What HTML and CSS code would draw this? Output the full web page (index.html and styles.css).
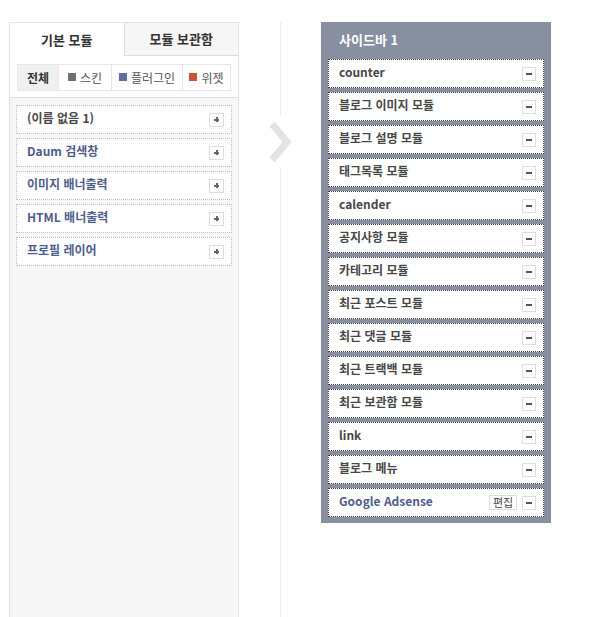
FILE: index.html
```html
<!DOCTYPE html>
<html lang="ko">
<head>
<meta charset="utf-8">
<title>사이드바 모듈</title>
<link rel="stylesheet" href="styles.css">
</head>
<body>
<div class="page">
  <section class="modules">
    <div class="modules-head">
      <div class="tabs">
        <div class="tab active">기본 모듈</div>
        <div class="tab">모듈 보관함</div>
      </div>
      <div class="filter">
        <span class="f-item f-all">전체</span>
        <span class="f-item f-skin"><i class="sq sq-skin"></i>스킨</span>
        <span class="f-item f-plugin"><i class="sq sq-plugin"></i>플러그인</span>
        <span class="f-item f-widget"><i class="sq sq-widget"></i>위젯</span>
      </div>
    </div>
    <ul class="mod-list">
      <li class="mod"><span class="name">(이름 없음 1)</span><span class="btn plus"></span></li>
      <li class="mod"><span class="name blue">Daum 검색창</span><span class="btn plus"></span></li>
      <li class="mod"><span class="name blue">이미지 배너출력</span><span class="btn plus"></span></li>
      <li class="mod"><span class="name blue">HTML 배너출력</span><span class="btn plus"></span></li>
      <li class="mod"><span class="name blue">프로필 레이어</span><span class="btn plus"></span></li>
    </ul>
  </section>

  <div class="divider">
    <div class="chevron">
      <svg width="24" height="44" viewBox="0 0 24 44"><path d="M4 4 L19 22 L4 40" fill="none" stroke="#e3e3e3" stroke-width="7" stroke-linecap="butt" stroke-linejoin="miter"/></svg>
    </div>
  </div>

  <section class="sidebar">
    <h2 class="sb-title">사이드바 1</h2>
    <ul class="sb-list">
      <li class="sb-item"><span class="name">counter</span><span class="btn minus"></span></li>
      <li class="sb-item"><span class="name">블로그 이미지 모듈</span><span class="btn minus"></span></li>
      <li class="sb-item"><span class="name">블로그 설명 모듈</span><span class="btn minus"></span></li>
      <li class="sb-item"><span class="name">태그목록 모듈</span><span class="btn minus"></span></li>
      <li class="sb-item"><span class="name">calender</span><span class="btn minus"></span></li>
      <li class="sb-item"><span class="name">공지사항 모듈</span><span class="btn minus"></span></li>
      <li class="sb-item"><span class="name">카테고리 모듈</span><span class="btn minus"></span></li>
      <li class="sb-item"><span class="name">최근 포스트 모듈</span><span class="btn minus"></span></li>
      <li class="sb-item"><span class="name">최근 댓글 모듈</span><span class="btn minus"></span></li>
      <li class="sb-item"><span class="name">최근 트랙백 모듈</span><span class="btn minus"></span></li>
      <li class="sb-item"><span class="name">최근 보관함 모듈</span><span class="btn minus"></span></li>
      <li class="sb-item"><span class="name">link</span><span class="btn minus"></span></li>
      <li class="sb-item"><span class="name">블로그 메뉴</span><span class="btn minus"></span></li>
      <li class="sb-item"><span class="name blue">Google Adsense</span><span class="actions"><span class="edit">편집</span><span class="btn minus"></span></span></li>
    </ul>
  </section>
</div>
</body>
</html>
```
FILE: styles.css
```css
* { box-sizing: border-box; }
html, body { margin: 0; padding: 0; background: #fff; overflow: hidden; }
body {
  font-family: "Noto Sans CJK KR", "Noto Sans", "Liberation Sans", sans-serif;
  font-size: 12px;
  color: #444;
  height: 617px;
}
ul { list-style: none; margin: 0; padding: 0; }

.page {
  display: flex;
  align-items: flex-start;
  padding: 22px 0 0 9px;
  height: 617px;
}

/* left panel */
.modules {
  width: 230px;
  height: 620px;
  background: #f7f7f7;
  border: 1px solid #e2e2e2;
  box-shadow: inset 4px 0 0 #f4f4f4;
  flex-shrink: 0;
}
.modules-head {
  background: #fff;
  border-bottom: 1px solid #dcdcdc;
  padding-bottom: 6px;
}
.tabs { display: flex; height: 33px; }
.tab {
  flex: 1;
  display: flex;
  align-items: center;
  justify-content: center;
  padding-bottom: 1px;
  font-weight: bold;
  font-size: 13px;
  color: #333;
  background: #f6f6f6;
  border-left: 1px solid #dcdcdc;
  border-bottom: 1px solid #dcdcdc;
}
.tab.active { background: #fff; border: 0; }

.filter {
  margin: 8px 7px 0;
  height: 27px;
  border: 1px solid #e6e6e6;
  display: flex;
}
.f-item {
  display: flex;
  align-items: center;
  justify-content: center;
  padding-bottom: 1px;
  color: #555;
  border-left: 1px solid #e6e6e6;
}
.f-all { width: 40px; border-left: 0; background: #f0f0f0; font-weight: bold; color: #333; }
.f-skin { width: 53px; }
.f-plugin { width: 71px; }
.f-widget { flex: 1; }
.sq { display: inline-block; width: 8px; height: 8px; margin-right: 4px; }
.sq-skin { background: #6f6f6f; }
.sq-plugin { background: #5d6e9e; }
.sq-widget { background: #c95638; }

.mod-list {
  padding: 7px 6px 0;
  display: flex;
  flex-direction: column;
  gap: 4px;
}
.mod {
  height: 29px;
  background: #fff;
  border: 1px dotted #bdbdbd;
  display: flex;
  align-items: center;
  justify-content: space-between;
  padding: 0 7px 0 10px;
  font-weight: bold;
  color: #484848;
}
.name { position: relative; top: -2px; }
.blue { color: #4f5d8c; }

.btn {
  width: 15px;
  height: 14px;
  border: 1px solid #dddddd;
  background: #fff;
  position: relative;
}
.plus::before, .plus::after, .minus::before {
  content: "";
  position: absolute;
  background: #666;
}
.plus::before { left: 4px; top: 5px; width: 5px; height: 2px; }
.plus::after { left: 5.5px; top: 3.5px; width: 2px; height: 5px; }
.minus { width: 14px; }
.minus::before { left: 3px; top: 5px; width: 6px; height: 2px; background: #555; }

/* divider */
.divider {
  width: 82px;
  height: 620px;
  position: relative;
  flex-shrink: 0;
  display: flex;
  justify-content: center;
}
.divider::before {
  content: "";
  display: block;
  width: 1px;
  height: 100%;
  background: #ececec;
}
.chevron {
  position: absolute;
  left: 29px;
  top: 94px;
  background: #fff;
  padding: 4px 0;
  line-height: 0;
}

/* right sidebar */
.sidebar {
  width: 230px;
  background: #878fa1;
  padding: 0 7px 6px;
  flex-shrink: 0;
}
.sb-title {
  margin: 0;
  height: 37px;
  display: flex;
  align-items: center;
  padding: 0 0 2px 11px;
  font-size: 13px;
  font-weight: bold;
  color: #fff;
}
.sb-list { display: flex; flex-direction: column; gap: 4px; }
.sb-item {
  height: 29px;
  background: #fff;
  border: 1px dotted #3c3c3c;
  display: flex;
  align-items: center;
  justify-content: space-between;
  padding: 0 7px 0 10px;
  font-weight: bold;
  color: #474747;
}
.actions { display: flex; align-items: center; gap: 5px; }
.edit {
  height: 15px;
  width: 28px;
  border: 1px solid #dddddd;
  font-size: 11px;
  font-weight: normal;
  color: #444;
  display: flex;
  align-items: center;
  justify-content: center;
  line-height: 1;
}
```
